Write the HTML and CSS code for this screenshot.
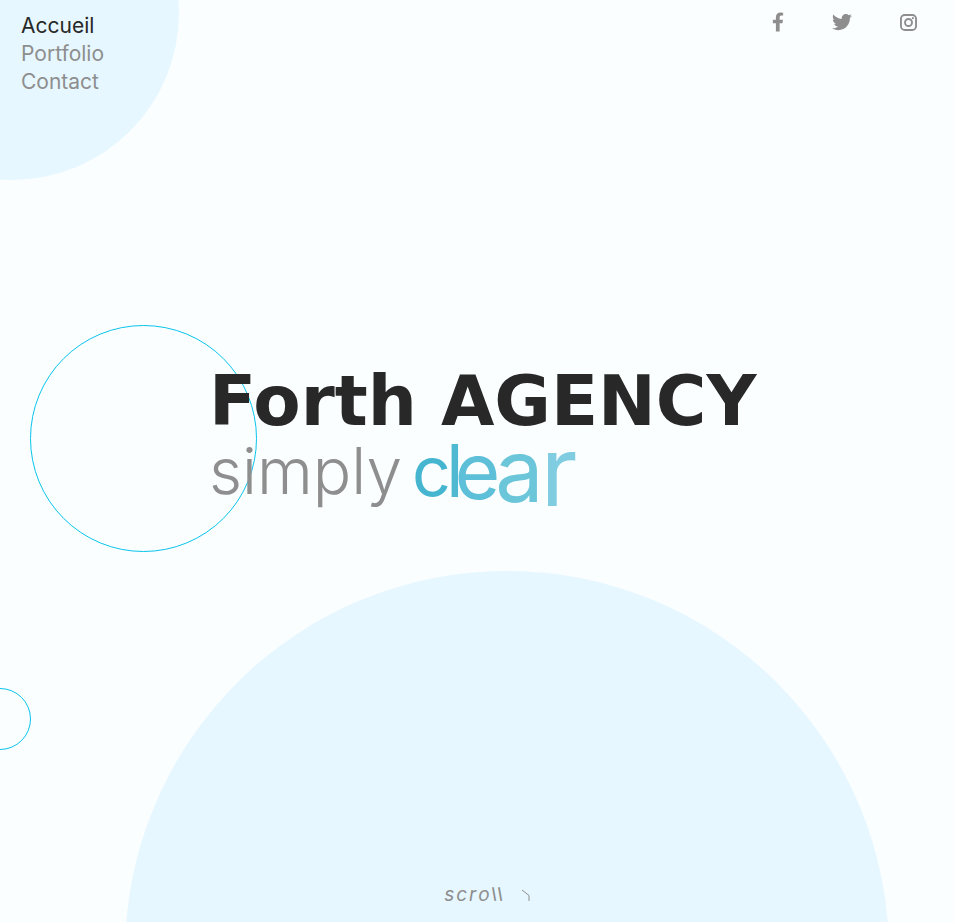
FILE: index.html
```html
<!DOCTYPE html>
<html lang="fr">
<head>
<meta charset="utf-8">
<meta name="viewport" content="width=device-width, initial-scale=1">
<title>Forth AGENCY</title>
<link rel="stylesheet" href="styles.css">
</head>
<body>
<div class="page">
  <div class="shapes" aria-hidden="true">
    <span class="disc disc-corner"></span>
    <span class="disc disc-bottom"></span>
    <span class="ring ring-large"></span>
    <span class="ring ring-small"></span>
  </div>
  <header class="top">
    <nav class="menu">
      <a class="current" href="#accueil">Accueil</a>
      <a href="#portfolio">Portfolio</a>
      <a href="#contact">Contact</a>
    </nav>
    <div class="social">
      <a href="#facebook" aria-label="Facebook"><svg width="12" height="20" viewBox="0 0 320 512"><path d="M279 288l14-93h-89v-60c0-25 12-50 52-50h41V7s-37-7-72-7c-73 0-121 44-121 125v70H23v93h81v224h100V288z"/></svg></a>
      <a href="#twitter" aria-label="Twitter"><svg width="20" height="20" viewBox="0 0 512 512"><path d="M459 152c0 4 0 9 0 14 0 138-105 298-298 298-59 0-114-17-161-47 8 1 16 1 25 1 49 0 94-16 130-45-46-1-85-31-98-73 7 1 13 2 20 2 9 0 19-1 28-4-48-10-84-52-84-103v-1c14 8 30 13 47 13-28-19-47-51-47-87 0-19 5-37 14-53 52 64 129 105 216 110-2-8-3-16-3-24 0-58 47-105 105-105 30 0 57 13 77 33 24-5 46-13 66-25-8 24-24 45-46 58 21-2 42-8 60-16-14 21-31 39-51 54z"/></svg></a>
      <a href="#instagram" aria-label="Instagram"><svg width="17" height="17" viewBox="0 0 18 18"><rect class="line" x="1" y="1" width="16" height="16" rx="4"/><circle class="line" cx="9" cy="9" r="3.7"/><circle cx="13.6" cy="4.4" r="1.1"/></svg></a>
    </div>
  </header>
  <main class="hero">
    <h1>Forth AGENCY</h1>
    <p class="tagline"><span>simply</span><span class="clear"><span>c</span><span>l</span><span>e</span><span>a</span><span>r</span></span></p>
  </main>
  <a class="scroll" href="#portfolio">
    <span class="word"><i>s</i><i>c</i><i>r</i><i>o</i><b>l</b><b>l</b></span>
    <svg width="10" height="14" viewBox="0 0 10 14"><path class="line thin" d="M1 2L8 7.5V13"/></svg>
  </a>
</div>
</body>
</html>
```
FILE: styles.css
```css
* {
  box-sizing: border-box;
}

body {
  margin: 0;
  background: #fbfeff;
  color: #8e8e8e;
  font-family: Inter, "Liberation Sans", sans-serif;
}

a {
  color: inherit;
  text-decoration: none;
}

svg {
  display: block;
  fill: currentColor;
}

.line {
  fill: none;
  stroke: currentColor;
  stroke-width: 2;
}

.thin {
  stroke-width: 1;
}

.page {
  position: relative;
  display: flex;
  flex-direction: column;
  min-height: 100vh;
  overflow: hidden;
}

.shapes {
  position: absolute;
  inset: 0;
}

.disc,
.ring {
  position: absolute;
  aspect-ratio: 1;
  border-radius: 50%;
}

.disc {
  background: #e6f7ff;
}

.ring {
  border: 1px solid #08c4ec;
}

.disc-corner {
  top: -154px;
  left: -155px;
  width: 35vw;
}

.disc-bottom {
  top: 571px;
  left: calc(10vw + 29px);
  width: 80vw;
}

.ring-large {
  top: 325px;
  left: 30px;
  width: 227px;
}

.ring-small {
  top: 688px;
  left: -31px;
  width: 62px;
}

.top,
.hero,
.scroll {
  position: relative;
}

.top {
  display: flex;
  justify-content: space-between;
  align-items: flex-start;
  padding: 12px 38px 0 21px;
}

.menu {
  display: flex;
  flex-direction: column;
  font-size: 21px;
  line-height: 28px;
}

.menu .current {
  color: #282828;
}

.social {
  display: flex;
  align-items: center;
  gap: 48px;
}

.hero {
  flex: 1;
  padding: 275px 0 0 209px;
}

h1 {
  margin: 0;
  color: #282828;
  font-family: "DejaVu Sans", sans-serif;
  font-size: 69px;
  font-weight: 700;
  line-height: 60px;
  white-space: nowrap;
}

.tagline {
  display: flex;
  gap: 10px;
  margin: 0;
  font-size: 64px;
  font-weight: 300;
  line-height: 80px;
}

.clear {
  display: flex;
  font-weight: 400;
}

.clear span:nth-child(1) {
  color: #45b5d0;
  font-size: 68px;
}

.clear span:nth-child(2) {
  margin-left: -5px;
  color: #50b9d2;
  font-size: 73px;
}

.clear span:nth-child(3) {
  margin-left: -9px;
  color: #5dbfd8;
  font-size: 78px;
}

.clear span:nth-child(4) {
  margin-left: -5px;
  color: #6bc6da;
  font-size: 86px;
}

.clear span:nth-child(5) {
  margin-left: -3px;
  color: #80cce0;
  font-size: 98px;
}

.scroll {
  display: flex;
  align-items: center;
  align-self: center;
  gap: 18px;
  padding: 0 0 15px 20px;
  font-size: 19px;
  line-height: 24px;
}

.word {
  display: flex;
  gap: 2px;
}

.word b {
  font-weight: 400;
  transform: rotate(-10deg);
}
```
